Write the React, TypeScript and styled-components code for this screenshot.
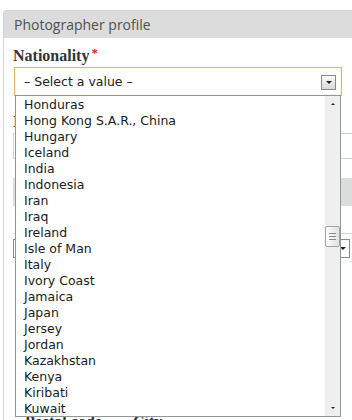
import React from "react";
import styled, { createGlobalStyle } from "styled-components";

const GlobalStyle = createGlobalStyle`
  html, body { margin: 0; padding: 0; background: #ffffff; overflow: hidden; }
  body { width: 352px; height: 420px; }
`;

const Page = styled.div`
  padding: 10px 0 0 3px;
  width: 352px;
  height: 420px;
  box-sizing: border-box;
  overflow: hidden;
`;

const Panel = styled.section`
  width: 400px;
  border-left: 1px solid #d4d4d4;
  border-top: 1px solid #d4d4d4;
  border-radius: 4px 0 0 0;
  height: 430px;
`;

const PanelHeader = styled.div`
  height: 27px;
  background: #dcdcdc;
  border-radius: 3px 0 0 0;
  padding-left: 10px;
  font-family: "Open Sans", "DejaVu Sans", sans-serif;
  font-size: 14px;
  line-height: 27px;
  color: #505050;
`;

const PanelBody = styled.div`
  padding-left: 9px;
  display: flex;
  flex-direction: column;
`;

const Label = styled.div<{ $top: number }>`
  margin-top: ${(p) => p.$top}px;
  font-family: "Liberation Serif", "DejaVu Serif", serif;
  font-weight: bold;
  font-size: 16px;
  line-height: 18px;
  color: #333333;
  height: 18px;
  display: flex;
  gap: 2px;
`;

const Required = styled.span`
  color: #d21f1f;
  font-size: 13px;
  line-height: 12px;
`;

const SelectWrap = styled.div`
  position: relative;
  margin: 2px 0 0 1px;
  width: 328px;
`;

const SelectBox = styled.div`
  height: 29px;
  box-sizing: border-box;
  border: 1px solid #e2b465;
  box-shadow: inset 0 0 2px #f6dfb0;
  background: #ffffff;
  display: flex;
  align-items: center;
  justify-content: space-between;
  padding: 0 5px 0 9px;
  font-family: "DejaVu Sans", Verdana, sans-serif;
  font-size: 12.5px;
  color: #222222;
`;

const ArrowButton = styled.div`
  width: 15px;
  height: 15px;
  box-sizing: border-box;
  border: 1px solid #8a8a8a;
  background: linear-gradient(#fafafa, #d9d9d9);
  display: flex;
  align-items: center;
  justify-content: center;
  margin-top: 2px;
`;

const Triangle = styled.div<{ $up?: boolean; $size?: number }>`
  width: 0;
  height: 0;
  border-left: ${(p) => p.$size ?? 3.5}px solid transparent;
  border-right: ${(p) => p.$size ?? 3.5}px solid transparent;
  ${(p) =>
    p.$up
      ? `border-bottom: ${(p.$size ?? 3.5)}px solid #222;`
      : `border-top: ${(p.$size ?? 3.5)}px solid #222;`}
`;

const Dropdown = styled.div`
  position: absolute;
  top: 28px;
  left: 1px;
  width: 326px;
  height: 322px;
  box-sizing: border-box;
  border: 1px solid #8f969c;
  background: #ffffff;
  display: flex;
  z-index: 5;
`;

const OptionList = styled.ul`
  list-style: none;
  margin: 0;
  padding: 1px 0 0 0;
  flex: 1;
  overflow: hidden;
`;

const Option = styled.li`
  height: 16px;
  line-height: 16px;
  padding-left: 8px;
  font-family: "DejaVu Sans", Verdana, sans-serif;
  font-size: 12.5px;
  color: #1a1a1a;
  white-space: nowrap;
`;

const Scrollbar = styled.div`
  width: 16px;
  background: #efefef;
  border-left: 1px solid #f7f7f7;
  box-sizing: border-box;
  display: flex;
  flex-direction: column;
  align-items: center;
`;

const ScrollArrow = styled.div`
  height: 16px;
  width: 100%;
  display: flex;
  align-items: center;
  justify-content: center;
`;

const ScrollTrack = styled.div`
  flex: 1;
  width: 100%;
  display: flex;
  flex-direction: column;
`;

const ThumbOffset = styled.div`
  height: 114px;
`;

const Thumb = styled.div`
  width: 15px;
  height: 21px;
  box-sizing: border-box;
  border: 1px solid #a2a2a2;
  border-radius: 2px;
  background: linear-gradient(90deg, #fdfdfd, #e2e2e2);
  display: flex;
  flex-direction: column;
  align-items: center;
  justify-content: center;
  gap: 2px;
`;

const Grip = styled.div`
  width: 7px;
  height: 1px;
  background: #8a8a8a;
`;

const TextInput = styled.div`
  margin-top: 2px;
  height: 26px;
  width: 400px;
  box-sizing: border-box;
  border: 1px solid #d0d0d0;
`;

const SubHeader = styled.div`
  margin-top: 19px;
  height: 28px;
  width: 400px;
  background: #dcdcdc;
`;

const Rule = styled.div<{ $top: number }>`
  margin-top: ${(p) => p.$top}px;
  height: 1px;
  width: 400px;
  background: #d6d6d6;
`;

const SmallSelectRow = styled.div`
  margin-top: 5px;
  height: 19px;
  display: flex;
`;

const SmallSelect = styled.div`
  width: 337px;
  height: 19px;
  box-sizing: border-box;
  border: 1px solid #8a8a8a;
  display: flex;
  justify-content: flex-end;
  align-items: center;
  padding-right: 3px;
`;

const SmallRowLine = styled.div`
  flex: 1;
  height: 23px;
  box-sizing: border-box;
  border-bottom: 1px solid #d6d6d6;
`;

const AddressRow = styled.div`
  margin-top: 155px;
  display: flex;
  font-family: "Liberation Serif", "DejaVu Serif", serif;
  font-weight: bold;
  font-size: 16px;
  line-height: 18px;
  color: #333333;
  padding-left: 12px;
`;

const AddressLabel = styled.div<{ $w: number }>`
  width: ${(p) => p.$w}px;
`;

const countries = [
  "Honduras",
  "Hong Kong S.A.R., China",
  "Hungary",
  "Iceland",
  "India",
  "Indonesia",
  "Iran",
  "Iraq",
  "Ireland",
  "Isle of Man",
  "Italy",
  "Ivory Coast",
  "Jamaica",
  "Japan",
  "Jersey",
  "Jordan",
  "Kazakhstan",
  "Kenya",
  "Kiribati",
  "Kuwait",
];

export default function App() {
  return (
    <>
      <GlobalStyle />
      <Page>
        <Panel>
          <PanelHeader>Photographer profile</PanelHeader>
          <PanelBody>
            <Label $top={9}>
              Nationality<Required>*</Required>
            </Label>
            <SelectWrap>
              <SelectBox>
                <span>– Select a value –</span>
                <ArrowButton>
                  <Triangle />
                </ArrowButton>
              </SelectBox>
              <Dropdown>
                <OptionList>
                  {countries.map((c) => (
                    <Option key={c}>{c}</Option>
                  ))}
                </OptionList>
                <Scrollbar>
                  <ScrollArrow>
                    <Triangle $up $size={2.5} />
                  </ScrollArrow>
                  <ScrollTrack>
                    <ThumbOffset />
                    <Thumb>
                      <Grip />
                      <Grip />
                      <Grip />
                    </Thumb>
                  </ScrollTrack>
                  <ScrollArrow>
                    <Triangle $size={2.5} />
                  </ScrollArrow>
                </Scrollbar>
              </Dropdown>
            </SelectWrap>
            <Label $top={17}>Instagram</Label>
            <TextInput />
            <SubHeader />
            <Rule $top={27} />
            <SmallSelectRow>
              <SmallSelect>
                <Triangle $size={3} />
              </SmallSelect>
              <SmallRowLine />
            </SmallSelectRow>
            <AddressRow>
              <AddressLabel $w={108}>Postal code</AddressLabel>
              <AddressLabel $w={60}>City</AddressLabel>
            </AddressRow>
          </PanelBody>
        </Panel>
      </Page>
    </>
  );
}
